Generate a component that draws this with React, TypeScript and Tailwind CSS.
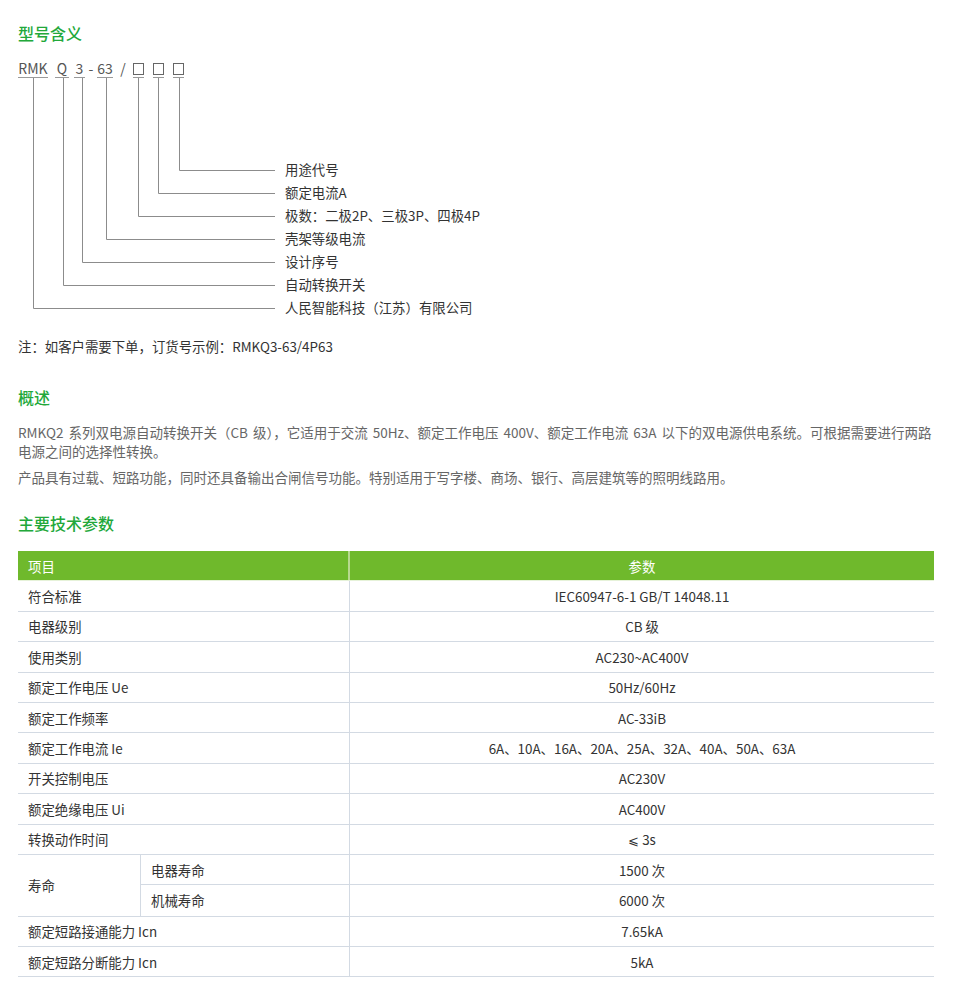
import React from "react";

const FONT = { fontFamily: '"Noto Sans CJK SC", "Noto Sans", sans-serif' };

// 型号含义 diagram: vertical line x (svg coords) and the y of its elbow
const branches = [
  { x: 15.5, y: 230.5 },
  { x: 45.5, y: 207.5 },
  { x: 64.5, y: 184.5 },
  { x: 88.5, y: 161.5 },
  { x: 120.5, y: 138.5 },
  { x: 140.5, y: 115.5 },
  { x: 161.5, y: 92.5 },
];

const labels = [
  "用途代号",
  "额定电流A",
  "极数：二极2P、三极3P、四极4P",
  "壳架等级电流",
  "设计序号",
  "自动转换开关",
  "人民智能科技（江苏）有限公司",
];

const rows: { name: string; value: string }[] = [
  { name: "符合标准", value: "IEC60947-6-1 GB/T 14048.11" },
  { name: "电器级别", value: "CB 级" },
  { name: "使用类别", value: "AC230~AC400V" },
  { name: "额定工作电压 Ue", value: "50Hz/60Hz" },
  { name: "额定工作频率", value: "AC-33iB" },
  { name: "额定工作电流 Ie", value: "6A、10A、16A、20A、25A、32A、40A、50A、63A" },
  { name: "开关控制电压", value: "AC230V" },
  { name: "额定绝缘电压 Ui", value: "AC400V" },
  { name: "转换动作时间", value: "⩽ 3s" },
];

const tailRows = [
  { name: "额定短路接通能力 Icn", value: "7.65kA" },
  { name: "额定短路分断能力 Icn", value: "5kA" },
];

function Heading({ children }: { children: React.ReactNode }) {
  return (
    <h2 className="text-[16px] leading-[24px] text-[#22a83a] font-medium">
      {children}
    </h2>
  );
}

function CodeSeg({ text, w, line = true }: { text: string; w: string; line?: boolean }) {
  return (
    <span
      className={`flex h-[20px] justify-center whitespace-nowrap leading-[20px] ${w} ${
        line ? "border-b border-[#9a9a9a]" : ""
      }`}
    >
      {text}
    </span>
  );
}

function BoxSeg() {
  return (
    <span className="flex h-[20px] w-[11px] items-center justify-center border-b border-[#9a9a9a]">
      <span className="mt-[2px] h-[12px] w-[11px] border border-[#666]" />
    </span>
  );
}

function Row({ name, value }: { name: string; value: string }) {
  return (
    <div className="flex h-[30.4px] border-b border-[#d3dae3]">
      <div className="flex w-[332px] items-center border-r border-[#d3dae3] pl-[10px]">
        {name}
      </div>
      <div className="flex flex-1 items-center justify-center">{value}</div>
    </div>
  );
}

export default function App() {
  return (
    <div className="min-h-[1007px] bg-white px-[18px] pt-[21px] text-[13.4px] text-[#333]" style={FONT}>
      {/* Model meaning */}
      <Heading>型号含义</Heading>

      <div className="mt-[13px] flex text-[14px] text-[#555]">
        <CodeSeg text="RMK" w="w-[30px]" />
        <span className="w-[7px]" />
        <CodeSeg text="Q" w="w-[14px]" />
        <span className="w-[5px]" />
        <CodeSeg text="3" w="w-[11px]" />
        <CodeSeg text="-" w="w-[12px]" line={false} />
        <CodeSeg text="63" w="w-[16px]" />
        <CodeSeg text="/" w="w-[20px]" line={false} />
        <BoxSeg />
        <span className="w-[9px]" />
        <BoxSeg />
        <span className="w-[9px]" />
        <BoxSeg />
      </div>

      <div className="flex">
        <svg width="262" height="241" className="shrink-0">
          {branches.map((b, i) => (
            <g key={i} stroke="#8c8c8c" strokeWidth="1" fill="none">
              <line x1={b.x} y1={0} x2={b.x} y2={b.y} />
              <line x1={b.x} y1={b.y} x2={257} y2={b.y} />
            </g>
          ))}
        </svg>
        <div className="ml-[5px] flex flex-col pt-[80px] leading-[23px] text-[#333]">
          {labels.map((l) => (
            <span key={l}>{l}</span>
          ))}
        </div>
      </div>

      <p className="mt-[17px] leading-[20px] text-[#333]">
        注：如客户需要下单，订货号示例：RMKQ3-63/4P63
      </p>

      {/* Overview */}
      <div className="mt-[29px]">
        <Heading>概述</Heading>
      </div>
      <div className="mt-[14px] text-[13.5px] leading-[19px] text-[#666] [word-spacing:2px]">
        <p>
          RMKQ2 系列双电源自动转换开关（CB 级），它适用于交流 50Hz、额定工作电压 400V、额定工作电流 63A 以下的双电源供电系统。可根据需要进行两路电源之间的选择性转换。
        </p>
        <p className="mt-[7px]">
          产品具有过载、短路功能，同时还具备输出合闸信号功能。特别适用于写字楼、商场、银行、高层建筑等的照明线路用。
        </p>
      </div>

      {/* Main technical parameters */}
      <div className="mt-[24px]">
        <Heading>主要技术参数</Heading>
      </div>

      <div className="mt-[16px] w-[916px]">
        <div className="flex h-[30.4px] border-b border-[#e6f2d9] bg-[#6fb92c] text-white">
          <div className="flex w-[332px] items-center border-r-2 border-[#b7d98f] pl-[10px]">
            项目
          </div>
          <div className="flex flex-1 items-center justify-center">参数</div>
        </div>

        {rows.map((r) => (
          <Row key={r.name} {...r} />
        ))}

        <div className="flex border-b border-[#d3dae3]">
          <div className="flex w-[123px] items-center border-r border-[#d3dae3] pl-[10px]">
            寿命
          </div>
          <div className="flex flex-1 flex-col">
            <div className="flex h-[30.4px] border-b border-[#d3dae3]">
              <div className="flex w-[209px] items-center border-r border-[#d3dae3] pl-[10px]">
                电器寿命
              </div>
              <div className="flex flex-1 items-center justify-center">1500 次</div>
            </div>
            <div className="flex h-[30.4px]">
              <div className="flex w-[209px] items-center border-r border-[#d3dae3] pl-[10px]">
                机械寿命
              </div>
              <div className="flex flex-1 items-center justify-center">6000 次</div>
            </div>
          </div>
        </div>

        {tailRows.map((r) => (
          <Row key={r.name} {...r} />
        ))}
      </div>
    </div>
  );
}
